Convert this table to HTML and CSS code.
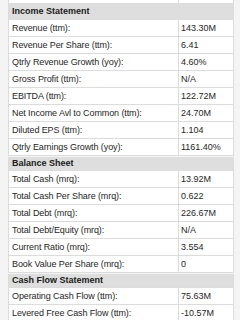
FILE: index.html
```html
<!DOCTYPE html>
<html>
<head>
<meta charset="utf-8">
<link rel="stylesheet" href="styles.css">
</head>
<body>
<div class="page">
  <div class="stub"><div class="cell"></div><div class="cell"></div></div>

  <div class="tbl first">
    <div class="hd">Income Statement</div>
    <div class="lb">Revenue (ttm):</div><div class="vl">143.30M</div>
    <div class="lb">Revenue Per Share (ttm):</div><div class="vl">6.41</div>
    <div class="lb">Qtrly Revenue Growth (yoy):</div><div class="vl">4.60%</div>
    <div class="lb">Gross Profit (ttm):</div><div class="vl">N/A</div>
    <div class="lb">EBITDA (ttm):</div><div class="vl">122.72M</div>
    <div class="lb">Net Income Avl to Common (ttm):</div><div class="vl">24.70M</div>
    <div class="lb">Diluted EPS (ttm):</div><div class="vl">1.104</div>
    <div class="lb">Qtrly Earnings Growth (yoy):</div><div class="vl">1161.40%</div>
  </div>

  <div class="tbl">
    <div class="hd">Balance Sheet</div>
    <div class="lb">Total Cash (mrq):</div><div class="vl">13.92M</div>
    <div class="lb">Total Cash Per Share (mrq):</div><div class="vl">0.622</div>
    <div class="lb">Total Debt (mrq):</div><div class="vl">226.67M</div>
    <div class="lb">Total Debt/Equity (mrq):</div><div class="vl">N/A</div>
    <div class="lb">Current Ratio (mrq):</div><div class="vl">3.554</div>
    <div class="lb">Book Value Per Share (mrq):</div><div class="vl">0</div>
  </div>

  <div class="tbl">
    <div class="hd">Cash Flow Statement</div>
    <div class="lb">Operating Cash Flow (ttm):</div><div class="vl">75.63M</div>
    <div class="lb">Levered Free Cash Flow (ttm):</div><div class="vl">-10.57M</div>
  </div>
</div>
</body>
</html>
```

FILE: styles.css
```css
html, body {
  margin: 0;
  padding: 0;
  background: #f4f4f4;
}

body {
  font-family: "Liberation Sans", Arial, sans-serif;
  font-size: 9px;
  color: #262626;
}

.page {
  padding: 0 6px 0 8px;
  display: flex;
  flex-direction: column;
}

.stub {
  display: grid;
  grid-template-columns: 169px 1fr;
  column-gap: 1px;
  padding: 0 1px 1px;
  background: #dcdcdc;
}

.stub .cell {
  height: 3px;
  background: #fff;
}

.tbl {
  display: grid;
  grid-template-columns: 169px 1fr;
  gap: 1px;
  padding: 0 1px 1px;
  background: #dcdcdc;
  margin-top: 1px;
}

.tbl.first {
  margin-top: 0;
}

.hd {
  grid-column: 1 / -1;
  height: 13px;
  line-height: 13px;
  padding-left: 3px;
  font-weight: bold;
  background: #dedede;
  color: #1a1a1a;
}

.first .hd {
  height: 15px;
  line-height: 15px;
}

.lb,
.vl {
  height: 16px;
  line-height: 16px;
  background: #fff;
  white-space: nowrap;
  overflow: hidden;
}

.lb {
  padding-left: 3px;
  letter-spacing: -0.1px;
}

.vl {
  padding-left: 2px;
}
```
